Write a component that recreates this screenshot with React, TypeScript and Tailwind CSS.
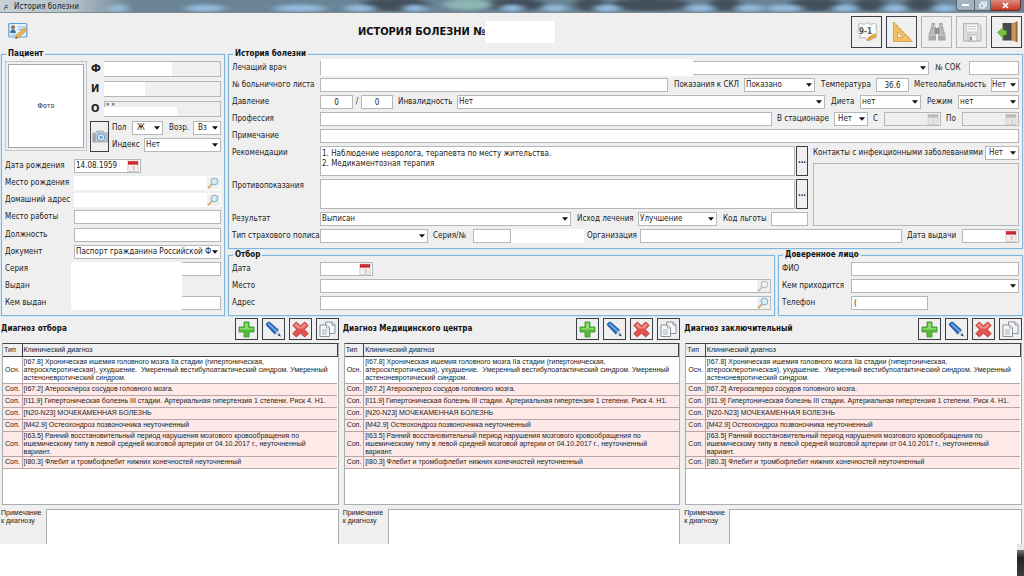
import React from 'react';
import clsx from 'clsx';

const FIELD = 'h-[14px] border border-[#b4b8bb] bg-white px-[2px] text-[8px] leading-[12px] text-[#222] outline-none min-w-0 rounded-none';

interface LabelProps {
  htmlFor?: string;
  className?: string;
  children: React.ReactNode;
}

const Label: React.FC<LabelProps> = ({ htmlFor, className, children }) => (
  <label htmlFor={htmlFor} className={clsx('shrink-0 whitespace-nowrap', className)}>
    {children}
  </label>
);

interface InputProps {
  id: string;
  className?: string;
  value?: string;
  label?: string;
  disabled?: boolean;
}

const Input: React.FC<InputProps> = ({ id, className, value = '', label, disabled }) => (
  <input id={id} aria-label={label} defaultValue={value} disabled={disabled} className={clsx(FIELD, className)} />
);

interface SelectProps {
  id: string;
  className?: string;
  value?: string;
  pad?: string;
}

const Select: React.FC<SelectProps> = ({ id, className, value = '', pad = 'pl-px' }) => (
  <span className={clsx('relative flex h-[14px] min-w-0', className)}>
    <select
      id={id}
      defaultValue={value}
      className={clsx('h-[14px] w-full appearance-none overflow-hidden rounded-none border border-[#b4b8bb] bg-white pr-[9px] text-[8px] leading-[12px] text-[#222] outline-none', pad)}
    >
      <option value={value}>{value}</option>
    </select>
    <svg viewBox="0 0 7 4" className="pointer-events-none absolute right-[3px] top-[5px] h-[4px] w-[6px]">
      <path d="M0 0h7L3.5 4z" fill="#111" />
    </svg>
  </span>
);

const CalendarIcon: React.FC<{ muted?: boolean }> = ({ muted }) => (
  <svg viewBox="0 0 12 12" className="h-[12px] w-[12px]">
    <rect x="1" y="1.5" width="10" height="10" fill={muted ? '#e4e4e4' : '#f6f1f1'} stroke={muted ? '#c4c4c4' : '#c9b9b9'} strokeWidth=".6" />
    <rect x="1" y="1" width="10" height="3.6" fill={muted ? '#b9b9b9' : '#c8242b'} />
    <path d="M3 .3v2M6 .3v2M9 .3v2" stroke={muted ? '#eee' : '#f3c9c9'} strokeWidth=".7" />
    <path d="M4.6 6.4h2v4M7.2 6.4v4" stroke={muted ? '#cfcfcf' : '#e0a5a5'} strokeWidth=".7" fill="none" />
  </svg>
);

const DateField: React.FC<InputProps> = ({ id, className, value = '', disabled }) => (
  <span className={clsx('flex h-[14px] shrink-0 items-center border border-[#b4b8bb]', disabled ? 'bg-[#eeeeee]' : 'bg-white', className)}>
    <input id={id} defaultValue={value} disabled={disabled} className="w-0 min-w-0 flex-1 bg-transparent pl-px text-[8px] leading-[12px] text-[#222] outline-none" />
    <button type="button" disabled={disabled} aria-label="Календарь" className="mr-px h-[12px] w-[12px] bg-[#f0f0f0]">
      <CalendarIcon muted={disabled} />
    </button>
  </span>
);

const Loupe: React.FC<{ muted?: boolean }> = ({ muted }) => (
  <svg viewBox="0 0 12 12" className="h-[12px] w-[12px]">
    <path d="M1.5 10.8L5 7" stroke={muted ? '#c4c4c4' : '#d5ab6b'} strokeWidth="1.8" strokeLinecap="round" />
    <circle cx="7.4" cy="4.4" r="3.2" fill={muted ? '#eef0f1' : '#d4ecf8'} stroke={muted ? '#b9bdc0' : '#8fb5cc'} strokeWidth="1.1" />
  </svg>
);

const SearchField: React.FC<InputProps & { muted?: boolean }> = ({ id, className, muted }) => (
  <span className={clsx('flex h-[14px] min-w-0 flex-1 border bg-white', className)}>
    <input id={id} className="w-0 min-w-0 flex-1 bg-transparent px-[2px] text-[8px] outline-none" />
    <button type="button" aria-label="Найти" className="h-[12px] w-[13px] bg-[#efefef]">
      <Loupe muted={muted} />
    </button>
  </span>
);

interface GroupProps {
  title: string;
  className?: string;
  children: React.ReactNode;
}

const Group: React.FC<GroupProps> = ({ title, className, children }) => (
  <fieldset className={clsx('min-w-0 border border-[#85b4d9] pl-[3px] pr-[3px] pt-[2px] shadow-[0_0_0_1px_#d5e8f5]', className)}>
    <legend className="ml-px px-[2px] text-[8px] font-bold leading-[10px] text-[#111]">{title}</legend>
    {children}
  </fieldset>
);

const Row: React.FC<{ className?: string; children: React.ReactNode }> = ({ className, children }) => (
  <div className={clsx('flex min-h-[14px] items-center', className)}>{children}</div>
);

/* ---------- icons ---------- */

const CardIcon = () => (
  <svg viewBox="0 0 20 18" className="h-[18px] w-[20px]">
    <rect x=".8" y="1.5" width="18" height="13.5" rx="1" fill="#e3f0fa" stroke="#5f9fd3" strokeWidth="1.2" />
    <circle cx="5" cy="5.2" r="1.9" fill="#8a7440" />
    <path d="M2.2 11c0-5 5.6-5 5.6 0z" fill="#3f6f9c" />
    <path d="M10 5h7M10 7.5h5M3 13h6" stroke="#8fb6d6" strokeWidth="1" />
    <path d="M7.5 16.5l1-3.6 8-7.2 2.2 2.4-8 7.4z" fill="#f0b44f" stroke="#b97f2c" strokeWidth=".6" />
    <path d="M7.5 16.5l.6-2 1.3 1.4z" fill="#444" />
  </svg>
);

const NoteIcon = () => (
  <svg viewBox="0 0 24 24" className="h-[24px] w-[24px]">
    <path d="M3.500 4.500l2-1 4 .8L12 2.500l3 1.800 4.500-.8 2 1.500-.5 4 1.200 3-1.500 2.500.3 3-4.500.5-3.500 2.500-3-2.800-5.500.3.500-3.500L2.500 12 4 9z" fill="#fbfbfb" stroke="#a9a9a9" strokeWidth=".8" />
    <text x="4" y="13.500" fontSize="8" fontWeight="bold" fill="#555">9-1</text>
    <path d="M12 20.500l1.200-3 6.800-4 1.700 2.500-6.700 4.200z" fill="#eda947" stroke="#b5792b" strokeWidth=".5" />
  </svg>
);

const TriangleIcon = () => (
  <svg viewBox="0 0 24 24" className="h-[24px] w-[24px]">
    <path d="M3.500 2v19.500h19z M7.500 12v5.500h5.500z" fill="#f2bf62" fillRule="evenodd" stroke="#cf9640" strokeWidth=".8" />
    <path d="M6 6.500l1.200-.8M9 9.500l1-1M12 12.500l1-1M15 15.500l1-1M18 18.500l1-1" stroke="#a56d1f" strokeWidth=".6" />
  </svg>
);

const BinocularsIcon = () => (
  <svg viewBox="0 0 24 24" className="h-[24px] w-[24px]">
    <path d="M6.500 3h3.500v3l1 2v12.500H3.500V15L6 7z" fill="#a6a8a9" />
    <path d="M17.500 3H14v3l-1 2v12.500h7.500V15L18 7z" fill="#a6a8a9" />
    <path d="M10 8h4v6h-4z" fill="#929495" />
    <path d="M4 15h6.500M13.500 15H20M6.500 6H10M14 6h3.500" stroke="#dcdcdc" strokeWidth="1" />
    <path d="M6.500 9v5M8.500 8v6M15.500 8v6M17.500 9v5" stroke="#cfcfcf" strokeWidth=".8" />
  </svg>
);

const FloppyIcon = () => (
  <svg viewBox="0 0 24 24" className="h-[24px] w-[24px]">
    <path d="M3.500 3.500h15l2.500 2.500v15h-17.500z" fill="#dedede" stroke="#b0b0b0" strokeWidth="1" />
    <path d="M6.500 4h11v8h-11z" fill="#f6f6f6" stroke="#bcbcbc" strokeWidth=".7" />
    <path d="M8 6.500h8M8 9h8" stroke="#c0c0c0" strokeWidth=".8" />
    <path d="M8 15h9v6H8z" fill="#f2f2f2" stroke="#a8a8a8" strokeWidth=".7" />
    <path d="M9.500 16.500h2.500v4H9.500z" fill="#999" />
  </svg>
);

const ExitIcon = () => (
  <svg viewBox="0 0 24 24" className="h-[24px] w-[24px]">
    <path d="M7.500 3h11v17.500h-11z" fill="#484848" />
    <path d="M16.500 3.500l5.500-2V22l-5.500-1.500z" fill="#c9975f" />
    <path d="M20.700 2l1.800-.7V22.200l-1.800-.5z" fill="#94683b" />
    <path d="M2.500 12.500l6-5V10.500h3v4.500h-3v3.500z" fill="#7cc142" stroke="#4b8f23" strokeWidth=".7" />
  </svg>
);

const PlusIcon = () => (
  <svg viewBox="0 0 17 17" className="h-[17px] w-[17px]">
    <path d="M6 1h5v5h5v5h-5v5H6v-5H1V6h5z" fill="#56bd3b" stroke="#37912a" strokeWidth=".8" strokeLinejoin="round" />
    <path d="M7 2h3v5h5v1.500H2V7h5z" fill="#8ddb6f" />
  </svg>
);

const PencilIcon = () => (
  <svg viewBox="0 0 17 17" className="h-[17px] w-[17px]">
    <path d="M1 3.800Q1.500 1.200 4.500 1l9.200 8-4 4.200z" fill="#2768bd" stroke="#1a4a8d" strokeWidth=".6" />
    <path d="M3.300 2.800l8.700 8" stroke="#7db8f2" strokeWidth="1.500" />
    <path d="M13.700 9l2 6.500-6-2.300z" fill="#cfd6dc" />
    <path d="M14.500 12.500l1.200 3-3-1.200z" fill="#1f3550" />
  </svg>
);

const CrossIcon = () => (
  <svg viewBox="0 0 17 17" className="h-[17px] w-[17px]">
    <path d="M4.200 1l4.300 3.700L12.800 1l3.400 3.400-3.900 4.100 3.900 4.100-3.400 3.400-4.300-3.700L4.200 16 .8 12.600l3.900-4.100L.8 4.400z" fill="#e0524f" stroke="#b9312f" strokeWidth=".8" strokeLinejoin="round" />
    <path d="M4.200 2.300l4.300 3.900 4.300-3.900 2 2L11.300 7.500H5.700L2.200 4.300z" fill="#f08b86" />
  </svg>
);

const CopyIcon = () => (
  <svg viewBox="0 0 17 17" className="h-[17px] w-[17px]" fill="#f4f6f7" stroke="#7f8990" strokeWidth=".9">
    <path d="M6.500 1h6.500l3 2.500v9h-9.500z" />
    <path d="M13 1v3h3" />
    <path d="M1 4h6.500l3 2.500V15.500H1z" />
    <path d="M7.500 4V7h3M3 9h5M3 11h5M3 13h5" strokeWidth=".6" />
  </svg>
);

const CameraIcon = () => (
  <svg viewBox="0 0 16 13" className="h-[13px] w-[16px]">
    <path d="M.8 3h3l1-1.800h6.500L12.300 3h3v9H.8z" fill="#c5cbd0" stroke="#949ca3" strokeWidth=".8" />
    <path d="M1.200 4h2.500v7.500H1.200z" fill="#9aa3aa" />
    <circle cx="9" cy="7.300" r="3.700" fill="#dbe9f5" stroke="#6d9fcc" strokeWidth="1.100" />
    <circle cx="9" cy="7.300" r="1.700" fill="#6fa8dc" />
  </svg>
);

/* ---------- window frame ---------- */

// blurred wallpaper that shows through the glass title bar
const DARK_SPOTS = [[395, 34], [515, 30], [590, 16], [650, 40], [725, 16], [815, 26], [870, 16], [920, 16]];
const LIGHT_SPOTS = [[118, 10], [205, 20], [300, 26], [360, 15], [415, 12], [512, 12], [555, 12], [607, 13], [700, 14], [750, 14], [785, 18], [845, 12], [895, 12], [945, 12]];

const Glass = () => (
  <svg viewBox="0 0 1024 13" preserveAspectRatio="none" className="absolute inset-0 h-full w-full">
    <defs>
      <filter id="glass" x="-50%" y="-100%" width="200%" height="300%">
        <feGaussianBlur stdDeviation="5 2" />
      </filter>
      <linearGradient id="glassFade">
        <stop offset="0" stopColor="#c6d0d6" />
        <stop offset=".07" stopColor="#b5c2ca" />
        <stop offset=".13" stopColor="#b5c2ca" stopOpacity="0" />
      </linearGradient>
    </defs>
    <rect width="1024" height="13" fill="#6a8496" />
    {DARK_SPOTS.map(([x, r]) => <ellipse key={x} cx={x} cy="5" rx={r} ry="7" fill="#434f5a" filter="url(#glass)" />)}
    <ellipse cx="468" cy="5" rx="24" ry="6" fill="#8db5b4" filter="url(#glass)" />
    {LIGHT_SPOTS.map(([x, r]) => <ellipse key={x} cx={x} cy="9" rx={r} ry="4" fill="#92b9dc" filter="url(#glass)" />)}
    <rect width="1024" height="13" fill="url(#glassFade)" />
  </svg>
);

const TitleBar = () => (
  <header className="relative flex h-[13px] items-start justify-between overflow-hidden border-b border-[#7c8a93]">
    <Glass />
    <div className="relative flex items-center gap-[5px] pl-[3px]">
      <svg viewBox="0 0 6 8" className="h-[8px] w-[6px]">
        <path d="M1 7l2-5 2 1M2 4l3 1" stroke="#4a5560" strokeWidth=".9" fill="none" />
      </svg>
      <h1 className="text-[8px] leading-[13px] text-[#222]">История болезни</h1>
    </div>
    <div className="relative mr-[3px] flex h-[11px]">
      <button type="button" aria-label="Свернуть" className="flex w-[19px] items-center justify-center rounded-bl-sm border border-t-0 border-[#55636e] bg-[#a3b3c0]">
        <span className="h-[2px] w-[7px] bg-white" />
      </button>
      <button type="button" aria-label="Развернуть" className="flex w-[16px] items-center justify-center border border-l-0 border-t-0 border-[#55636e] bg-[#a3b3c0]">
        <svg viewBox="0 0 8 8" className="h-[8px] w-[8px]" fill="none" stroke="#fff" strokeWidth="1.200">
          <path d="M1 3h4v4H1zM3 3V1h4v4H5" />
        </svg>
      </button>
      <button type="button" aria-label="Закрыть" className="flex w-[30px] items-center justify-center rounded-br-sm border border-l-0 border-t-0 border-[#6b2a22] bg-[linear-gradient(#dc8d7d,#c03a26)]">
        <svg viewBox="0 0 7 7" className="h-[7px] w-[7px]" stroke="#fff" strokeWidth="1.700">
          <path d="M1 1l5 5M6 1L1 6" />
        </svg>
      </button>
    </div>
  </header>
);

const TOOLS = [
  { label: 'Заметка', icon: <NoteIcon /> },
  { label: 'Измерения', icon: <TriangleIcon /> },
  { label: 'Поиск', icon: <BinocularsIcon />, disabled: true },
  { label: 'Сохранить', icon: <FloppyIcon />, disabled: true },
  { label: 'Выход', icon: <ExitIcon /> },
];

const Toolbar = () => (
  <div className="flex h-[36px] items-center pl-[8px] pr-[2px] pt-px">
    <button type="button" aria-label="Карточка пациента" className="mb-[2px]">
      <CardIcon />
    </button>
    <div className="flex flex-1 items-center justify-center pl-[34px]">
      <h2 className="text-[11px] font-bold leading-[14px] text-[#111]">ИСТОРИЯ БОЛЕЗНИ №</h2>
      <span className="h-[22px] w-[70px] bg-white" />
    </div>
    <div className="flex gap-[4px]">
      {TOOLS.map((tool) => (
        <button
          key={tool.label}
          type="button"
          aria-label={tool.label}
          disabled={tool.disabled}
          className={clsx('flex h-[32px] w-[31px] items-center justify-center border', tool.disabled ? 'border-[#b5b5b5]' : 'border-[#3c3f45]')}
        >
          {tool.icon}
        </button>
      ))}
    </div>
  </div>
);

/* ---------- patient ---------- */

const NAME_ROWS = [
  { id: 'f', label: 'Ф', value: '', cover: 'w-[68px]' },
  { id: 'i', label: 'И', value: '', cover: 'w-[41px]' },
  { id: 'o', label: 'О', value: '" "', cover: '' },
];

const Patient = () => (
  <Group title="Пациент" className="flex w-[224px] shrink-0 flex-col pb-[5px]">
    <div className="flex h-full flex-col">
      <div className="flex gap-[3px]">
        <div className="h-[90px] w-[82px] shrink-0 border border-[#c4c8ca] p-[2px]">
          <div className="flex h-full items-center justify-center border border-[#a3a6a8] bg-white text-[7px]">Фото</div>
        </div>
        <div className="flex flex-1 flex-col gap-[4px]">
          {NAME_ROWS.map((row) => (
            <Row key={row.id}>
              <Label htmlFor={row.id} className="w-[14px] pl-px text-[11px] font-bold">{row.label}</Label>
              <span className="relative flex h-[16px] flex-1">
                <input id={row.id} defaultValue={row.value} className="h-[16px] w-full min-w-0 border border-[#b4b8bb] bg-[#efefef] px-px pb-[3px] text-[8px] outline-none" />
                {row.cover
                  ? <span className={clsx('absolute left-0 top-px h-[14px] bg-white', row.cover)} />
                  : <span className="absolute left-0 top-[6px] h-[9px] w-[73px] bg-white" />}
              </span>
            </Row>
          ))}
          <div className="flex gap-[3px]">
            <button type="button" aria-label="Сделать фото" className="flex h-[31px] w-[19px] shrink-0 items-center justify-center border border-[#3c3f45]">
              <CameraIcon />
            </button>
            <div className="flex flex-1 flex-col justify-between">
              <Row>
                <Label htmlFor="sex" className="w-[20px]">Пол</Label>
                <Select id="sex" value="Ж" className="w-[31px]" pad="pl-[4px]" />
                <Label htmlFor="age" className="w-[30px] pl-[6px]">Возр.</Label>
                <Select id="age" value="Вз" className="flex-1" pad="pl-[4px]" />
              </Row>
              <Row>
                <Label htmlFor="idx" className="w-[32px]">Индекс</Label>
                <Select id="idx" value="Нет" className="flex-1" />
              </Row>
            </div>
          </div>
        </div>
      </div>

      <div className="mt-[7px] flex flex-1 flex-col justify-between">
        <Row>
          <Label htmlFor="birth" className="w-[69px]">Дата рождения</Label>
          <DateField id="birth" value="14.08.1959" className="w-[67px]" />
        </Row>
        <Row>
          <Label htmlFor="birthplace" className="w-[69px]">Место рождения</Label>
          <SearchField id="birthplace" className="border-white" />
        </Row>
        <Row>
          <Label htmlFor="home" className="w-[69px]">Домашний адрес</Label>
          <SearchField id="home" className="border-white" />
        </Row>
        <Row>
          <Label htmlFor="work" className="w-[69px]">Место работы</Label>
          <Input id="work" className="flex-1" />
        </Row>
        <Row>
          <Label htmlFor="post" className="w-[69px]">Должность</Label>
          <Input id="post" className="flex-1" />
        </Row>
        <Row>
          <Label htmlFor="doc" className="w-[69px]">Документ</Label>
          <Select id="doc" value="Паспорт гражданина Российской Ф" className="flex-1" />
        </Row>
        <div className="relative flex flex-col gap-[3px]">
          <Row>
            <Label htmlFor="series" className="w-[69px]">Серия</Label>
            <Input id="series" className="flex-1" />
          </Row>
          <Row>
            <Label className="w-[69px]">Выдан</Label>
          </Row>
          <Row>
            <Label htmlFor="issuer" className="w-[69px]">Кем выдан</Label>
            <Input id="issuer" className="flex-1" />
          </Row>
          <span className="absolute inset-y-0 left-[66px] w-[111px] bg-white" />
        </div>
      </div>
    </div>
  </Group>
);

/* ---------- history ---------- */

const TextRow: React.FC<{ id: string; label: string; value?: string }> = ({ id, label, value = '' }) => (
  <div className="flex">
    <Label htmlFor={id} className="w-[88px] leading-[14px]">{label}</Label>
    <textarea id={id} defaultValue={value} className="h-[30px] min-w-0 flex-1 resize-none border border-[#b4b8bb] bg-white px-px py-[2px] text-[8px] leading-[10px] outline-none" />
    <button type="button" aria-label={`${label}: выбрать`} className="ml-px h-[30px] w-[12px] border border-[#3c3f45] text-[8px] font-bold leading-[8px]">...</button>
  </div>
);

const History = () => (
  <Group title="История болезни" className="pb-[5px]">
    <div className="flex flex-col gap-[3px]">
      <Row>
        <Label htmlFor="doctor" className="w-[88px]">Лечащий врач</Label>
        <span className="relative flex flex-1">
          <Select id="doctor" className="flex-1" />
          <span className="absolute left-px top-[-2px] h-[17px] w-[372px] bg-white" />
        </span>
        <Label htmlFor="sok" className="w-[40px] pl-[6px]">№ СОК</Label>
        <Input id="sok" className="w-[50px]" />
      </Row>
      <Row>
        <Label htmlFor="sick" className="w-[88px]">№ больничного листа</Label>
        <Input id="sick" className="flex-1" />
        <Label htmlFor="skl" className="w-[76px] pl-[6px]">Показания к СКЛ</Label>
        <Select id="skl" value="Показано" className="w-[71px]" />
        <Label htmlFor="temp" className="w-[61px] pl-[6px]">Температура</Label>
        <Input id="temp" value="36.6" className="w-[33px] text-center" />
        <Label htmlFor="meteo" className="w-[82px] pl-[5px]">Метеолабильность</Label>
        <Select id="meteo" value="Нет" className="w-[28px]" pad="pl-0" />
      </Row>
      <Row>
        <Label htmlFor="bp1" className="w-[88px]">Давление</Label>
        <Input id="bp1" value="0" className="w-[33px] text-center" />
        <span className="w-[8px] text-center">/</span>
        <Input id="bp2" label="Давление нижнее" value="0" className="w-[32px] text-center" />
        <Label htmlFor="inv" className="w-[64px] pl-[5px]">Инвалидность</Label>
        <Select id="inv" value="Нет" className="flex-1" />
        <Label htmlFor="diet" className="w-[35px] pl-[6px]">Диета</Label>
        <Select id="diet" value="нет" className="w-[61px]" />
        <Label htmlFor="mode" className="w-[37px] pl-[6px]">Режим</Label>
        <Select id="mode" value="нет" className="w-[61px]" />
      </Row>
      <Row>
        <Label htmlFor="job" className="w-[88px]">Профессия</Label>
        <Input id="job" className="flex-1" />
        <Label htmlFor="hosp" className="w-[62px] pl-[5px]">В стационаре</Label>
        <Select id="hosp" value="Нет" className="w-[34px]" pad="pl-[3px]" />
        <Label htmlFor="from" className="w-[16px] pl-[5px]">С</Label>
        <DateField id="from" disabled className="w-[57px]" />
        <Label htmlFor="to" className="w-[21px] pl-[5px]">По</Label>
        <DateField id="to" disabled className="w-[57px]" />
      </Row>
      <Row>
        <Label htmlFor="note" className="w-[88px]">Примечание</Label>
        <Input id="note" className="flex-1" />
      </Row>
      <div className="flex gap-[5px]">
        <div className="flex min-w-0 flex-1 flex-col gap-[3px]">
          <TextRow id="rec" label="Рекомендации" value={'1. Наблюдение невролога, терапевта по месту жительства.\n2. Медикаментозная терапия'} />
          <TextRow id="contra" label="Противопоказания" />
          <Row>
            <Label htmlFor="result" className="w-[88px]">Результат</Label>
            <Select id="result" value="Выписан" className="flex-1" />
            <Label htmlFor="outcome" className="w-[67px] pl-[6px]">Исход лечения</Label>
            <Select id="outcome" value="Улучшение" className="w-[79px]" />
            <Label htmlFor="benefit" className="w-[54px] pl-[6px]">Код льготы</Label>
            <Input id="benefit" className="w-[37px]" />
          </Row>
        </div>
        <div className="flex w-[206px] shrink-0 flex-col gap-[3px]">
          <Row className="justify-between">
            <Label htmlFor="contacts">Контакты с инфекционными заболеваниями</Label>
            <Select id="contacts" value="Нет" className="w-[34px]" pad="pl-[3px]" />
          </Row>
          <textarea aria-label="Контакты" disabled className="flex-1 resize-none border border-[#b4b8bb] bg-[#efefef]" />
        </div>
      </div>
      <Row>
        <Label htmlFor="policy" className="w-[88px]">Тип страхового полиса</Label>
        <Select id="policy" className="w-[108px]" />
        <Label htmlFor="num" className="w-[45px] pl-[5px]">Серия/№</Label>
        <Input id="num" className="w-[38px]" />
        <span className="h-[14px] w-[73px] bg-white" />
        <Label htmlFor="org" className="w-[56px] pl-[3px]">Организация</Label>
        <Input id="org" className="flex-1" />
        <Label htmlFor="issued" className="w-[60px] pl-[5px]">Дата выдачи</Label>
        <DateField id="issued" className="w-[57px]" />
      </Row>
    </div>
  </Group>
);

const Selection = () => (
  <Group title="Отбор" className="flex-1 pb-[5px]">
    <div className="flex flex-col gap-[3px]">
      <Row>
        <Label htmlFor="selDate" className="w-[88px]">Дата</Label>
        <DateField id="selDate" className="w-[53px]" />
      </Row>
      <Row>
        <Label htmlFor="selPlace" className="w-[88px]">Место</Label>
        <SearchField id="selPlace" className="border-[#b4b8bb]" muted />
      </Row>
      <Row>
        <Label htmlFor="selAddr" className="w-[88px]">Адрес</Label>
        <SearchField id="selAddr" className="border-[#b4b8bb]" />
      </Row>
    </div>
  </Group>
);

const Trusted = () => (
  <Group title="Доверенное лицо" className="w-[245px] shrink-0 pb-[5px]">
    <div className="flex flex-col gap-[3px]">
      <Row>
        <Label htmlFor="trName" className="w-[69px]">ФИО</Label>
        <Input id="trName" className="flex-1" />
      </Row>
      <Row>
        <Label htmlFor="trRel" className="w-[69px]">Кем приходится</Label>
        <Select id="trRel" className="flex-1" />
      </Row>
      <Row>
        <Label htmlFor="trPhone" className="w-[69px]">Телефон</Label>
        <Input id="trPhone" value="(" className="w-[77px]" />
      </Row>
    </div>
  </Group>
);

/* ---------- diagnoses ---------- */

const DIAGNOSES = [
  { type: 'Осн.', text: '[I67.8] Хроническая ишемия головного мозга IIа стадии (гипертоническая,\nатеросклеротическая), ухудшение.  Умеренный вестибулоатактический синдром. Умеренный\nастеноневротический синдром.', main: true },
  { type: 'Соп.', text: '[I67.2] Атеросклероз сосудов головного мозга.' },
  { type: 'Соп.', text: '[I11.9] Гипертоническая болезнь III стадии. Артериальная гипертензия 1 степени. Риск 4. Н1.' },
  { type: 'Соп.', text: '[N20-N23] МОЧЕКАМЕННАЯ БОЛЕЗНЬ' },
  { type: 'Соп.', text: '[M42.9] Остеохондроз позвоночника неуточненный' },
  { type: 'Соп.', text: '[I63.5] Ранний восстановительный период нарушения мозгового кровообращения по\nишемическому типу в левой средней мозговой артерии от 04.10.2017 г., неуточненный\nвариант.' },
  { type: 'Соп.', text: '[I80.3] Флебит и тромбофлебит нижних конечностей неуточненный' },
];

const ACTIONS = [
  { label: 'Добавить', icon: <PlusIcon /> },
  { label: 'Изменить', icon: <PencilIcon /> },
  { label: 'Удалить', icon: <CrossIcon /> },
  { label: 'Копировать', icon: <CopyIcon /> },
];

const DiagnosisPanel: React.FC<{ id: string; title: string }> = ({ id, title }) => (
  <section className="min-w-0" aria-labelledby={`${id}-title`}>
    <div className="flex h-[22px] items-center justify-between">
      <h3 id={`${id}-title`} className="pl-px text-[8px] font-bold text-[#111]">{title}</h3>
      <div className="flex gap-[4px]">
        {ACTIONS.map((action) => (
          <button key={action.label} type="button" aria-label={action.label} className="flex h-[22px] w-[23px] items-center justify-center border border-[#3c3f45]">
            {action.icon}
          </button>
        ))}
      </div>
    </div>
    <div className="ml-[2px] mt-[3px] h-[162px] overflow-hidden border border-t-[#444] border-x-[#a9adb0] border-b-[#a9adb0] bg-white">
      <table className="w-full table-fixed border-collapse font-['Liberation_Sans',sans-serif] text-[7px] leading-[8px]">
        <thead>
          <tr className="h-[12px] bg-[#efefef] text-left">
            <th className="w-[19px] border-b border-r border-[#444] pl-px font-normal">Тип</th>
            <th className="border-b border-r border-[#444] pl-px font-normal">Клинический диагноз</th>
          </tr>
        </thead>
        <tbody>
          {DIAGNOSES.map((row) => (
            <tr key={row.text} className={clsx('border-b border-[#b9a5a5]', row.main ? 'h-[27px] bg-white' : 'h-[12px] bg-[#fdeae8]')}>
              <td className="border-r border-[#b9a5a5] pl-[2px]">{row.type}</td>
              <td className="whitespace-pre pl-px">{row.text}</td>
            </tr>
          ))}
        </tbody>
      </table>
    </div>
    <div className="mt-[4px] flex">
      <Label htmlFor={`${id}-note`} className="w-[46px] pl-px font-['Liberation_Sans',sans-serif] text-[7px] leading-[8px]">
        Примечание
        <br />
        к диагнозу
      </Label>
      <textarea id={`${id}-note`} className="h-[35px] min-w-0 flex-1 resize-none border border-b-0 border-[#a9adb0] bg-white outline-none" />
    </div>
  </section>
);

const App: React.FC = () => (
  <div className="flex min-h-screen flex-col bg-[#efefef] font-['DejaVu_Sans_Condensed','DejaVu_Sans',sans-serif] text-[8px] leading-[10px] text-[#222]">
    <TitleBar />
    <Toolbar />
    <main>
      <div className="flex gap-[3px] px-px">
        <Patient />
        <div className="flex min-w-0 flex-1 flex-col gap-px">
          <History />
          <div className="flex gap-[3px]">
            <Selection />
            <Trusted />
          </div>
        </div>
      </div>
      <div className="mt-[2px] grid grid-cols-3 gap-[3px] pr-[2px]">
        <DiagnosisPanel id="selection" title="Диагноз отбора" />
        <DiagnosisPanel id="center" title="Диагноз Медицинского центра" />
        <DiagnosisPanel id="final" title="Диагноз заключительный" />
      </div>
    </main>
    <footer className="flex flex-1 justify-end bg-white">
      <div className="flex w-[7px] flex-col">
        <div className="h-[6px] bg-[#e4e6e8]" />
        <div className="flex-1 bg-[linear-gradient(#777,#222_30%,#3a3f40)]" />
      </div>
    </footer>
  </div>
);

export default App;
